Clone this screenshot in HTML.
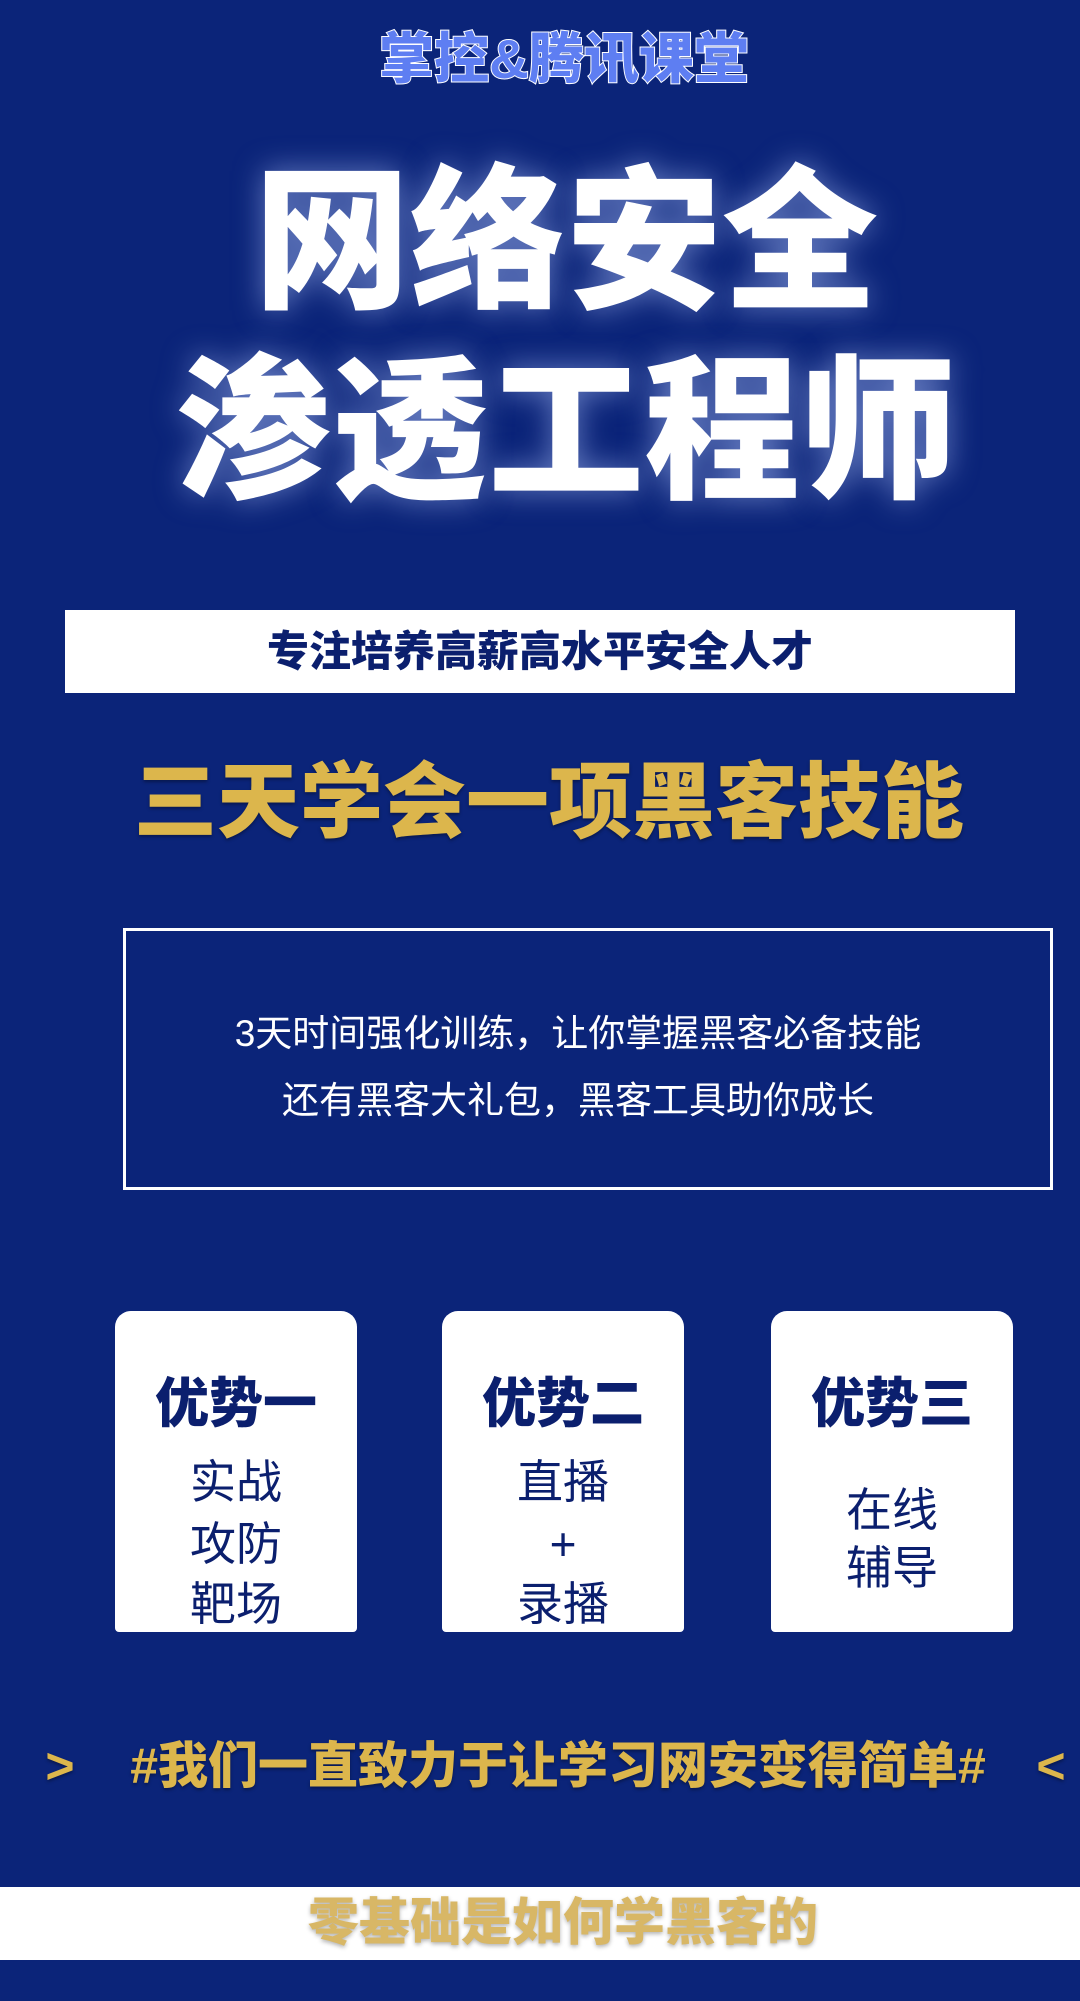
<!DOCTYPE html>
<html><head><meta charset="utf-8"><style>
*{margin:0;padding:0;box-sizing:border-box}
body{width:1080px;height:2001px;background:#0b2479;position:relative;overflow:hidden;font-family:"Liberation Sans","Noto Sans CJK SC",sans-serif}
.t{position:absolute;left:0;width:1080px;text-align:center;white-space:nowrap;line-height:1}
.top{top:32px;font-size:55px;font-weight:900;color:#5e7ef2;-webkit-text-stroke:2px #fff;paint-order:stroke fill;left:24px}
.big{font-size:156px;font-weight:900;color:#fff;text-shadow:0 0 30px rgba(180,200,255,.55);left:26px}
.bar{position:absolute;left:65px;top:610px;width:950px;height:83px;background:#fff;color:#0b1f6e;font-size:42px;font-weight:900;text-align:center;line-height:83px}
.gold{font-weight:900;color:#dcb64c;text-shadow:0 2px 3px rgba(0,0,0,.35)}
.box{position:absolute;left:123px;top:928px;width:930px;height:262px;border:3px solid #fff}
.box p{position:absolute;left:-10px;width:100%;text-align:center;color:#fff;font-size:37px;line-height:1}
.card{position:absolute;top:1311px;width:242px;height:321px;background:#fff;border-radius:16px 16px 4px 4px;text-align:center;color:#0b1f6e}
.card h3{position:absolute;top:66px;width:100%;font-size:54px;font-weight:900;line-height:1}
.card p{position:absolute;width:100%;font-size:46px;line-height:1}
</style></head><body>
<div class="t top">掌控&amp;腾讯课堂</div>
<div class="t big" style="top:165px">网络安全</div>
<div class="t big" style="top:355px">渗透工程师</div>
<div class="bar">专注培养高薪高水平安全人才</div>
<div class="t gold" style="top:761px;font-size:83px;left:9px">三天学会一项黑客技能</div>
<div class="box">
<p style="top:84px">3天时间强化训练，让你掌握黑客必备技能</p>
<p style="top:151px">还有黑客大礼包，黑客工具助你成长</p>
</div>
<div class="card" style="left:115px"><h3>优势一</h3><p style="top:148px">实战</p><p style="top:210px">攻防</p><p style="top:270px">靶场</p></div>
<div class="card" style="left:442px"><h3>优势二</h3><p style="top:148px">直播</p><p style="top:210px">+</p><p style="top:270px">录播</p></div>
<div class="card" style="left:771px"><h3>优势三</h3><p style="top:176px">在线</p><p style="top:234px">辅导</p></div>
<div class="t gold" style="top:1741px;font-size:50px;left:18px">#我们一直致力于让学习网安变得简单#</div>
<div class="t gold" style="top:1741px;font-size:50px;left:45px;width:30px">&gt;</div>
<div class="t gold" style="top:1741px;font-size:50px;left:1036px;width:30px">&lt;</div>
<div style="position:absolute;left:0;top:1887px;width:1080px;height:73px;background:#fff"></div>
<div class="t gold" style="top:1897px;font-size:51px;left:23px;color:#d8b766;text-shadow:0 2px 4px rgba(0,0,0,.3)">零基础是如何学黑客的</div>
</body></html>
